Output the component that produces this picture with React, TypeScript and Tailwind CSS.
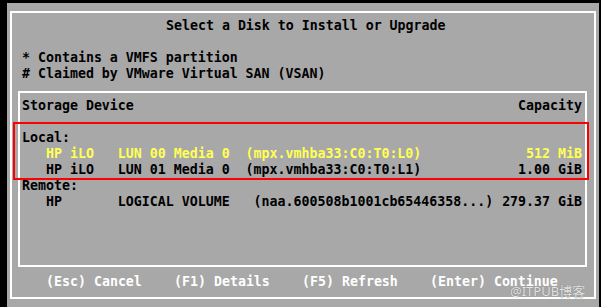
export default function App() {
  return (
    <div className="relative h-[307px] w-[601px] overflow-hidden bg-black font-['DejaVu_Sans_Mono',monospace] text-[13.28px] font-bold leading-[16px] text-black">
      <div className="ml-[7px] mt-[3px] h-[304px] w-[592px] bg-[#a8a8a8] pl-[3px] pt-[8px]">
        <div className="flex h-[288px] w-[586px] flex-col border-2 border-white">
          {/* title */}
          <div className="mt-[5px] h-4 whitespace-pre pl-[154px]">Select a Disk to Install or Upgrade</div>

          {/* legend */}
          <div className="mt-4 pl-[10px] whitespace-pre">
            <div>* Contains a VMFS partition</div>
            <div># Claimed by VMware Virtual SAN (VSAN)</div>
          </div>

          {/* device list */}
          <div className="ml-[6px] mt-[9px] h-[176px] w-[569px] border-2 border-white pl-[2px] pr-[3px] pt-[5px]">
            <div className="flex justify-between">
              <span>Storage Device</span>
              <span>Capacity</span>
            </div>
            <div className="mt-4">Local:</div>
            <div className="flex justify-between whitespace-pre text-[#ffff55]">
              <span>   HP iLO   LUN 00 Media 0  (mpx.vmhba33:C0:T0:L0)</span>
              <span>512 MiB</span>
            </div>
            <div className="flex justify-between whitespace-pre">
              <span>   HP iLO   LUN 01 Media 0  (mpx.vmhba33:C0:T0:L1)</span>
              <span>1.00 GiB</span>
            </div>
            <div>Remote:</div>
            <div className="flex justify-between whitespace-pre">
              <span>   HP       LOGICAL VOLUME   (naa.600508b1001cb65446358...)</span>
              <span>279.37 GiB</span>
            </div>
          </div>

          {/* footer keys */}
          <div className="mt-[7px] flex whitespace-pre pl-[34px] text-white">
            <span className="w-[128px]">(Esc) Cancel</span>
            <span className="w-[128px]">(F1) Details</span>
            <span className="w-[128px]">(F5) Refresh</span>
            <span>(Enter) Continue</span>
          </div>
        </div>
      </div>

      {/* red highlight annotation */}
      <div className="absolute left-[13px] top-[122px] h-[58px] w-[576px] border-2 border-[#ff0000]" />

      {/* watermark */}
      <div className="absolute left-[510px] top-[283px] font-['Noto_Sans','Noto_Sans_CJK_SC',sans-serif] text-[13px] font-normal leading-[16px] text-[#e4e4e4] [text-shadow:0_0_1px_#6a6a6a]">
        @ITPUB博客
      </div>
    </div>
  );
}
